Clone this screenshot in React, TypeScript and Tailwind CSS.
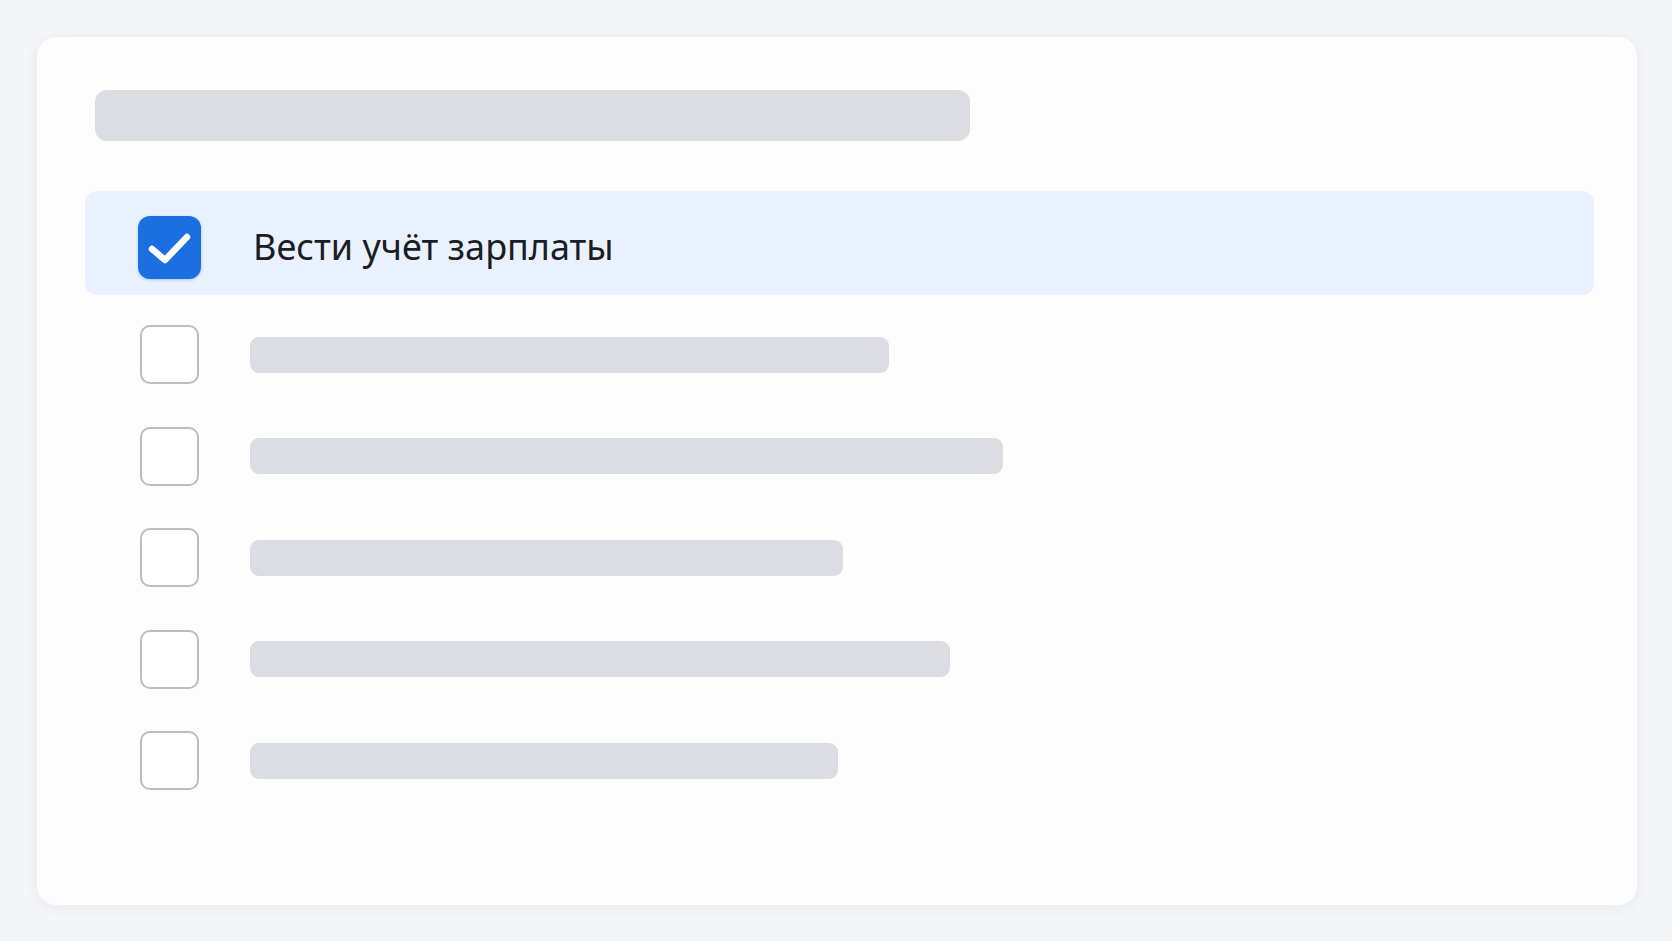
import React from 'react';

const rows = [639, 753, 593, 700, 588];

const CheckedBox = () => (
  <div className="flex h-[63px] w-[63px] items-center justify-center rounded-[12px] bg-[#1b6fe0] shadow-[0_1px_3px_rgba(27,111,224,0.3)]">
    <svg width="63" height="63" viewBox="0 0 63 63" fill="none">
      <path d="M14 33 L27 44 L49 21" stroke="#fff" strokeWidth="6.5" strokeLinecap="round" strokeLinejoin="round" />
    </svg>
  </div>
);

const EmptyBox = () => (
  <div className="h-[59px] w-[59px] rounded-[10px] border-[2.5px] border-[#b9bdc5] bg-white" />
);

export default function App() {
  return (
    <div className="min-h-[941px] w-full bg-[#f4f5f8] p-[36px] pr-[34px]" style={{ fontFamily: '"Noto Sans", "Open Sans", sans-serif' }}>
      <div className="h-[870px] rounded-[20px] border border-[#eef0f3] bg-[#fdfdfd] pl-[48px] pr-[43px] pt-[53px] shadow-[0_2px_14px_rgba(30,40,60,0.05)]">
        {/* title placeholder */}
        <div className="ml-[10px] h-[51px] w-[875px] rounded-[12px] bg-[#dcdde2]" />

        {/* selected item */}
        <div className="mt-[50px] flex h-[104px] items-center rounded-[12px] bg-[#e8f1fd] pl-[53px] pt-[8px]">
          <CheckedBox />
          <span className="ml-[52px] text-[36px] leading-none text-[#1a1d24]">Вести учёт зарплаты</span>
        </div>

        {/* other items */}
        <div className="mt-[9px]">
          {rows.map((w, i) => (
            <div key={i} className="flex h-[101.5px] items-center pl-[53px]">
              <div className="flex w-[63px] justify-center">
                <EmptyBox />
              </div>
              <div className="ml-[49px] h-[36px] rounded-[9px] bg-[#dcdde2]" style={{ width: w }} />
            </div>
          ))}
        </div>
      </div>
    </div>
  );
}
